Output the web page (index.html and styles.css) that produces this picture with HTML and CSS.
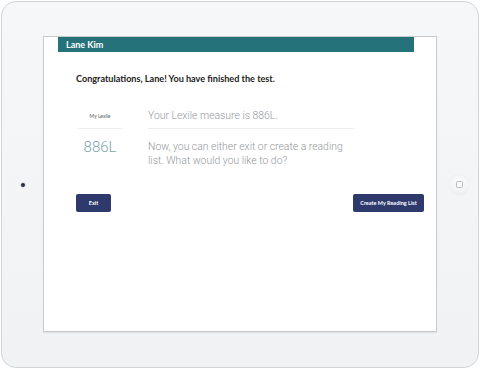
FILE: index.html
```html
<!DOCTYPE html>
<html lang="en">
<head>
<meta charset="utf-8">
<title>Lexile Test Complete</title>
<link rel="stylesheet" href="styles.css">
</head>
<body>
<div class="device">
  <div class="camera"></div>
  <div class="screen">
    <div class="topbar">Lane Kim</div>
    <div class="main">
      <h1 class="title">Congratulations, Lane! You have finished the test.</h1>
      <div class="result">
        <div class="cell label-cell first">My Lexile</div>
        <div class="cell text-cell first">Your Lexile measure is 886L.</div>
        <div class="cell measure">886L</div>
        <div class="cell text-cell second">Now, you can either exit or create a reading list. What would you like to do?</div>
      </div>
      <div class="actions">
        <button class="btn btn-exit">Exit</button>
        <button class="btn btn-create">Create My Reading List</button>
      </div>
    </div>
  </div>
  <div class="home"><span class="home-square"></span></div>
</div>
</body>
</html>
```
FILE: styles.css
```css
html, body {
  margin: 0;
  padding: 0;
  background: #ffffff;
}

body {
  width: 480px;
  height: 369px;
  padding: 1px 0 0 1px;
  box-sizing: border-box;
  font-family: "Lato", "Liberation Sans", sans-serif;
}

.device {
  width: 478px;
  height: 367px;
  box-sizing: border-box;
  border: 1px solid #d3d4d6;
  border-radius: 15px;
  background: linear-gradient(180deg, #f6f7f8 0%, #f1f2f3 100%);
  display: grid;
  grid-template-columns: 41px 394px 1fr;
  align-items: center;
}

.camera {
  justify-self: center;
  width: 4px;
  height: 4px;
  border-radius: 50%;
  background: #28303c;
  box-shadow: 0 0 0 1px #e1e3e6;
}

.screen {
  align-self: start;
  margin-top: 34px;
  width: 394px;
  height: 296px;
  box-sizing: border-box;
  background: #ffffff;
  border: 1px solid #c9cacc;
  box-shadow: 0 1px 1px rgba(0, 0, 0, 0.08);
}

.topbar {
  margin: 0 22px 0 14px;
  height: 15px;
  line-height: 15px;
  padding-left: 8px;
  background: #26727b;
  color: #ffffff;
  font-weight: 700;
  font-size: 9px;
}

.main {
  padding: 0 12px 0 32px;
}

.title {
  margin: 20px 0 0 0;
  font-size: 9.1px;
  line-height: 14px;
  font-weight: 700;
  color: #222222;
}

.result {
  margin: 23px 0 0 1px;
  display: grid;
  grid-template-columns: 46px 207px;
  column-gap: 25px;
}

.cell {
  font-family: "Roboto", "Liberation Sans", sans-serif;
}

.first {
  padding-bottom: 5px;
  border-bottom: 1px solid #eeeeee;
}

.label-cell {
  font-size: 5px;
  line-height: 14px;
  text-align: center;
  color: #555a60;
  font-family: "Lato", "Liberation Sans", sans-serif;
}

.text-cell {
  font-size: 10.4px;
  line-height: 14px;
  font-weight: 300;
  color: #94989d;
}

.measure {
  padding-top: 11px;
  font-size: 15px;
  line-height: 14px;
  font-weight: 300;
  text-align: center;
  color: #7ca5ac;
}

.second {
  padding-top: 11px;
}

.actions {
  margin-top: 26px;
  display: flex;
  justify-content: space-between;
}

.btn {
  height: 18px;
  border: none;
  border-radius: 2px;
  background: #2d3a6b;
  color: #ffffff;
  font-family: "Lato", "Liberation Sans", sans-serif;
  font-weight: 700;
  font-size: 5.5px;
  padding: 0;
}

.btn-exit {
  width: 35px;
}

.btn-create {
  width: 71px;
}

.home {
  justify-self: center;
  margin-left: 3px;
  width: 20px;
  height: 20px;
  border-radius: 50%;
  background: radial-gradient(circle at 50% 35%, #fdfdfd 0%, #f2f3f4 60%, #e6e7e9 100%);
  box-shadow: 0 0 1px rgba(0, 0, 0, 0.12);
  display: flex;
  align-items: center;
  justify-content: center;
}

.home-square {
  width: 5px;
  height: 5px;
  border: 1px solid #b9bcbf;
  border-radius: 1.5px;
}
```
